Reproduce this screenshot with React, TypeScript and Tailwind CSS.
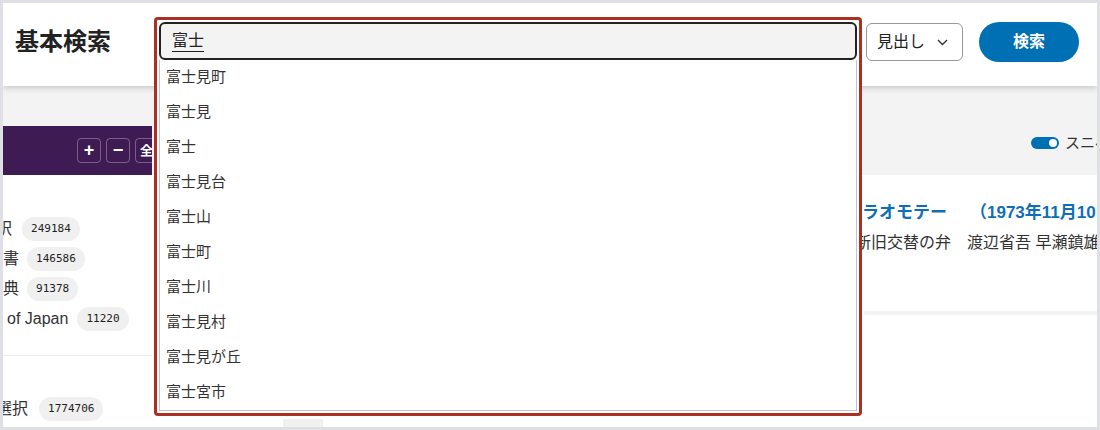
const suggestions = [
  "富士見町",
  "富士見",
  "富士",
  "富士見台",
  "富士山",
  "富士町",
  "富士川",
  "富士見村",
  "富士見が丘",
  "富士宮市",
];

const facets = [
  { label: "訳", count: "249184", shift: "-ml-[7px]", gap: "ml-[10px]" },
  { label: "書", count: "146586", shift: "ml-0", gap: "ml-[8px]" },
  { label: "典", count: "91378", shift: "ml-0", gap: "ml-[8px]" },
  { label: "of Japan", count: "11220", shift: "ml-[4px]", gap: "ml-[9px]" },
];

const Badge = ({ value, className }: { value: string; className: string }) => (
  <span
    className={`${className} inline-flex h-[24px] items-center rounded-full bg-[#f0f0f0] px-[9px] font-['DejaVu_Sans_Mono',monospace] text-[11px] text-[#222]`}
  >
    {value}
  </span>
);

export default function App() {
  return (
    <div className="h-[430px] w-[1100px] bg-[#dfe0e5] p-[3px] font-['Liberation_Sans','Noto_Sans_CJK_JP',sans-serif] text-[#333] [text-spacing-trim:space-all]">
      <div className="flex h-full w-full flex-col overflow-hidden bg-white">
        {/* header */}
        <header className="relative z-10 flex h-[83px] shrink-0 items-center bg-white pb-[5px] pl-[12px] shadow-[0_2px_6px_rgba(0,0,0,0.18)]">
          <h1 className="w-[139px] shrink-0 text-[24px] font-bold text-[#222]">基本検索</h1>

          <div className="relative h-[50px] w-[708px] shrink-0">
            <div className="absolute left-0 top-0 z-20 w-full rounded-[4px] border-[3px] border-[#a93023] bg-white p-[2px]">
              <div className="flex h-[38px] items-center rounded-[6px] border-2 border-[#222] bg-[#f3f3f3] px-[11px]">
                <span className="text-[16px] text-[#222] underline underline-offset-[5px]">富士</span>
              </div>
              <ul className="border border-t-0 border-[#c4c4c4] bg-white">
                {suggestions.map((s) => (
                  <li key={s} className="flex h-[35px] items-center pl-[6px] text-[15px] text-[#333]">
                    {s}
                  </li>
                ))}
              </ul>
            </div>
          </div>

          <div className="ml-[4px] flex h-[38px] w-[97px] shrink-0 items-center rounded-[6px] border border-[#9a9a9a] pl-[10px] text-[16px] text-[#222]">
            見出し
            <svg className="ml-[12px]" width="11" height="7" viewBox="0 0 11 7" fill="none">
              <path d="M1 1l4.5 4.5L10 1" stroke="#333" strokeWidth="1.4" />
            </svg>
          </div>

          <button className="ml-[16px] flex h-[40px] w-[100px] shrink-0 items-center justify-center rounded-full bg-[#0070b4] text-[16px] font-bold text-white">
            検索
          </button>
        </header>

        {/* body */}
        <div className="flex min-h-0 flex-1">
          <aside className="flex w-[149px] shrink-0 flex-col overflow-hidden">
            <div className="h-[40px] bg-[#f3f3f3]" />
            <div className="flex h-[49px] items-center gap-[5px] bg-[#3f1b53] pl-[74px]">
              <span className="flex h-[25px] w-[24px] shrink-0 items-center justify-center rounded-[4px] border border-white/30 text-[18px] font-bold text-white">+</span>
              <span className="flex h-[25px] w-[24px] shrink-0 items-center justify-center rounded-[4px] border border-white/30 text-[18px] font-bold text-white">−</span>
              <span className="flex h-[25px] w-[60px] shrink-0 items-center rounded-[4px] border border-white/30 pl-[4px] text-[13px] font-bold text-white">全て</span>
            </div>

            <div className="flex flex-col gap-[6px] pt-[42px]">
              {facets.map((f) => (
                <div key={f.count} className="flex h-[24px] items-center whitespace-nowrap text-[16px]">
                  <span className={f.shift}>{f.label}</span>
                  <Badge value={f.count} className={f.gap} />
                </div>
              ))}
            </div>
            <div className="mt-[24px] border-t border-[#ececec]" />
            <div className="mt-[41px] flex h-[24px] items-center whitespace-nowrap text-[16px]">
              <span className="-ml-[7px]">選択</span>
              <Badge value="1774706" className="ml-[11px]" />
            </div>
          </aside>

          <main className="flex min-w-0 flex-1 flex-col overflow-hidden">
            <div className="flex h-[89px] shrink-0 items-start whitespace-nowrap bg-[#f3f3f3] pl-[879px] pt-[51px]">
              <div className="flex h-[12px] items-center">
                <span className="flex h-[12px] w-[28px] shrink-0 items-center justify-end rounded-full bg-[#0070b4] pr-[2px]">
                  <span className="h-[8px] w-[8px] rounded-full bg-white" />
                </span>
                <span className="ml-[6px] text-[15px] text-[#333]">スニペット表示</span>
              </div>
            </div>

            <div className="pb-[56px] pl-[24px] pt-[26px]">
              <div className="flex h-[24px] items-center whitespace-nowrap text-[17px] font-bold leading-[24px] text-[#0f6fb6]">
                <span className="w-[686px] shrink-0 overflow-hidden">テレビ番組表　NHK総合　新日本紀行　ふるさとの歌まつり　ウ</span>
                <span>ラオモテー</span>
                <span className="ml-[23px]">（1973年11月10日）</span>
              </div>
              <div className="mt-[6px] flex h-[24px] items-center whitespace-nowrap text-[16px] leading-[24px] text-[#333]">
                <span className="w-[679px] shrink-0 overflow-hidden">放送ライブラリー所蔵番組　ドラマ　第12回　</span>
                <span>新旧交替の弁　渡辺省吾 早瀬鎮雄</span>
              </div>
            </div>
            <div className="ml-[712px] h-[4px] shrink-0 bg-[#f3f3f3]" />
            <div className="ml-[131px] mt-[104px] h-[9px] w-[40px] shrink-0 bg-[#f0f0f0]" />
          </main>
        </div>
      </div>
    </div>
  );
}
